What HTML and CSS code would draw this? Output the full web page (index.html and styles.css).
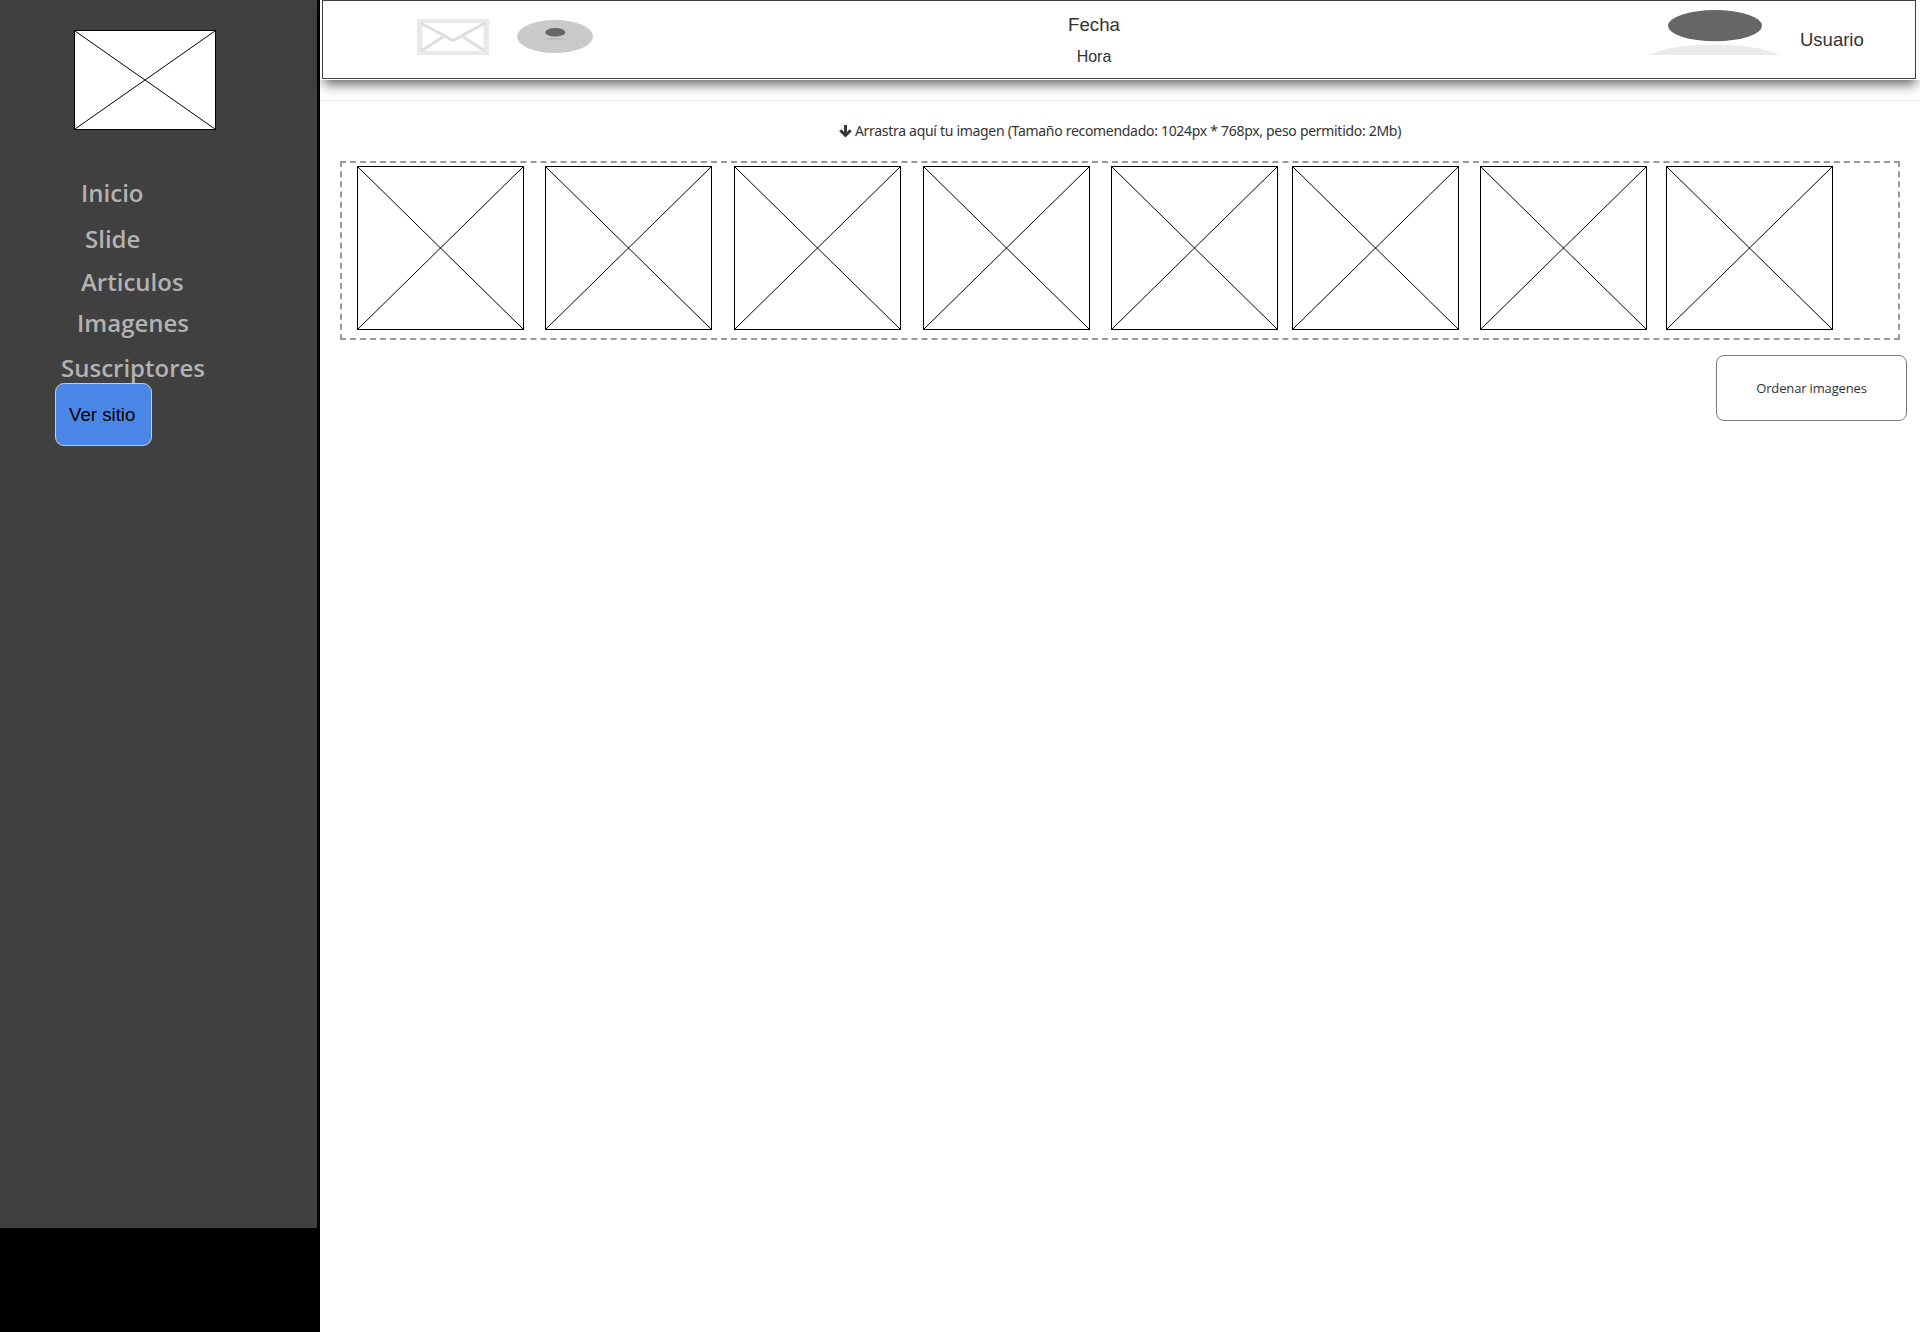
FILE: index.html
```html
<!DOCTYPE html>
<html lang="es">
<head>
<meta charset="utf-8">
<title>Imagenes</title>
<link rel="stylesheet" href="styles.css">
</head>
<body>
<svg width="0" height="0" class="defs" aria-hidden="true">
  <symbol id="cross" viewBox="0 0 100 100" preserveAspectRatio="none">
    <path d="M0 0L100 100M100 0L0 100" fill="none" stroke="#000" stroke-width="1" vector-effect="non-scaling-stroke"/>
  </symbol>
</svg>
<div class="page">
  <aside class="sidebar">
    <svg class="placeholder logo"><use href="#cross"/></svg>
    <nav class="menu">
      <a class="inicio">Inicio</a>
      <a class="slide">Slide</a>
      <a class="articulos">Articulos</a>
      <a class="imagenes">Imagenes</a>
      <a class="suscriptores">Suscriptores</a>
    </nav>
    <a class="site-button">Ver sitio</a>
    <div class="sidebar-end"></div>
  </aside>
  <main class="main">
    <header class="topbar">
      <div class="topbar-inner">
        <svg class="mail" width="72" height="36" viewBox="0 0 72 36">
          <g fill="none">
            <path d="M0 2H72M0 34H72" stroke="#e9e9e9" stroke-width="4"/>
            <path d="M2.800 0V36M69.200 0V36" stroke="#e9e9e9" stroke-width="5.500"/>
            <path class="mail-fold" d="M4 4L33 20Q36 22.500 39 20L68 4M4 32L26 18M68 32L46 18" stroke="#dedede" stroke-width="3"/>
          </g>
        </svg>
        <svg class="avatar" width="76" height="33" viewBox="0 0 76 33">
          <ellipse cx="38" cy="16.500" rx="38" ry="16.500" fill="#cacaca"/>
          <path d="M24 20.500Q30 17.800 38 17.800T52 20.500Z" fill="#bcbcbc"/>
          <ellipse cx="38.300" cy="12.200" rx="10" ry="4.300" fill="#666"/>
        </svg>
        <div class="clock">
          <div class="date">Fecha</div>
          <div class="time">Hora</div>
        </div>
        <svg class="user-icon" width="132" height="45" viewBox="0 0 132 45">
          <path d="M0 45C18 38 36 34.500 66 34.500S114 38 132 45Z" fill="#ebebeb"/>
          <ellipse class="user-head" cx="67" cy="15.700" rx="47" ry="15.600" fill="#666"/>
        </svg>
        <span class="user">Usuario</span>
      </div>
    </header>
    <hr class="rule">
    <p class="hint">
      <svg width="13" height="14" viewBox="0 0 13 14"><path d="M6.500 1V11.500M1.300 6.300L6.500 11.500L11.700 6.300" fill="none" stroke="#333" stroke-width="2.900"/></svg>
      <span>Arrastra aquí tu imagen (Tamaño recomendado: 1024px * 768px, peso permitido: 2Mb)</span>
    </p>
    <section class="dropzone">
      <svg class="placeholder"><use href="#cross"/></svg>
      <svg class="placeholder"><use href="#cross"/></svg>
      <svg class="placeholder"><use href="#cross"/></svg>
      <svg class="placeholder"><use href="#cross"/></svg>
      <svg class="placeholder"><use href="#cross"/></svg>
      <svg class="placeholder"><use href="#cross"/></svg>
      <svg class="placeholder"><use href="#cross"/></svg>
      <svg class="placeholder"><use href="#cross"/></svg>
    </section>
    <a class="order-button">Ordenar imagenes</a>
  </main>
</div>
</body>
</html>
```
FILE: styles.css
```css
* { box-sizing: border-box; }
body { margin: 0; background: #fff; color: #333; font-family: "Liberation Sans", Arial, sans-serif; }
.defs { display: none; }
.page { display: flex; height: 1332px; overflow: hidden; }

.placeholder { display: block; flex: none; width: 167px; height: 164px; border: 1px solid #000; background: #fff; }

/* Sidebar */
.sidebar { display: flex; flex-direction: column; flex: none; width: 320px; padding-top: 30px; background: #404040; border-right: 3px solid #000; }
.logo { width: 142px; height: 100px; margin-left: 74px; }
.menu { display: flex; flex-direction: column; margin-top: 48px; font: 600 24px/30px "Open Sans", sans-serif; color: #b2b2b2; }
.inicio { margin-left: 81px; }
.slide { margin: 16px 0 0 85px; }
.articulos { margin: 13px 0 0 81px; }
.imagenes { margin: 11px 0 0 77px; }
.suscriptores { margin: 15px 0 0 61px; }
.site-button { position: relative; width: 97px; height: 63px; margin-left: 55px; padding-left: 13px; line-height: 61px; font-size: 18.67px; color: #000; background: #4a86e8; border: 1px solid #ccc; border-radius: 9px; }
.sidebar-end { height: 104px; margin-top: auto; background: #000; }

/* Top bar */
.main { flex: 1; min-width: 0; }
.topbar { height: 80px; padding: 0 4px 1px 2px; background: #fff; box-shadow: 0 8px 12px -4px rgba(0, 0, 0, .65); }
.topbar-inner { display: flex; align-items: flex-start; height: 79px; border: 1px solid #404040; }
.mail { margin: 18px 0 0 94px; }
.mail-fold { filter: blur(.6px); }
.avatar { margin: 19px 0 0 28px; }
.clock { width: 120px; margin: 13px 0 0 441px; text-align: center; }
.date { font-size: 18.67px; line-height: 22px; }
.time { margin-top: 12px; font-size: 16px; line-height: 18px; }
.user-icon { margin: 9px 0 0 494px; }
.user-head { filter: blur(.6px); }
.user { margin: 28px 0 0 20px; font-size: 18.5px; line-height: 22px; }

/* Content */
.rule { height: 1px; margin: 20px 0 0; border: 0; background: #ebebeb; }
.hint { display: flex; align-items: center; justify-content: center; gap: 3px; width: 1600px; height: 20px; margin: 20px 0 20px; font: 14px/20px "Noto Sans", sans-serif; letter-spacing: -.3px; white-space: nowrap; }
.dropzone { display: flex; width: 1560px; height: 179px; margin-left: 20px; padding: 3px 0 0 15px; border: 2px dashed #999; }
.dropzone .placeholder { margin-right: 21px; }
.dropzone .placeholder:nth-child(2) { margin-right: 22px; }
.dropzone .placeholder:nth-child(3) { margin-right: 22px; }
.dropzone .placeholder:nth-child(5) { margin-right: 14px; }
.dropzone .placeholder:nth-child(7) { margin-right: 19px; }
.order-button { display: block; width: 191px; height: 66px; margin: 15px 13px 0 auto; text-align: center; font: 13px/64px "Open Sans", sans-serif; letter-spacing: -.15px; border: 1px solid #797979; border-radius: 8px; }
```
